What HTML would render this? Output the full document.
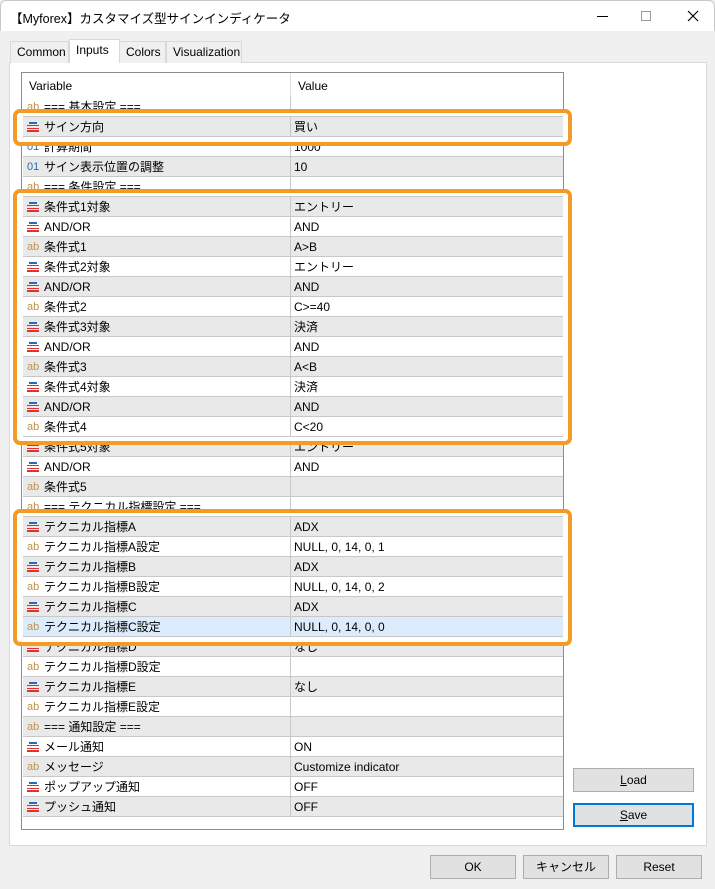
<!DOCTYPE html>
<html><head><meta charset="utf-8"><style>
*{margin:0;padding:0;box-sizing:border-box}
body{width:715px;height:889px;background:#f0f0f0;font-family:"Liberation Sans","Noto Sans CJK JP",sans-serif;font-size:12px;color:#000;position:relative;overflow:hidden}
.abs{position:absolute}
.title{left:0;top:0;width:715px;height:31px;background:#fff;border:1px solid #c8c8c8;border-bottom:none;border-radius:6px 6px 0 0}
.title span{position:absolute;left:9px;top:7px;font-size:12.5px}
.tab{position:absolute;top:41px;height:22px;border:1px solid #d9d9d9;border-bottom:none;background:#f0f0f0;padding:0 6px;line-height:20px;font-size:12px}
.page{left:9px;top:62px;width:698px;height:784px;background:#fff;border:1px solid #d9d9d9}
.tbl{left:21px;top:72px;width:543px;height:758px;border:1px solid #8c8c8c;background:#fff;overflow:hidden}
.hdr{position:absolute;left:0;top:0;width:541px;height:24px}
.hdr span{position:absolute;top:6px}
.row{position:absolute;left:1px;width:540px;height:20px;border-bottom:1px solid #c8c8c8;line-height:19px}
.g{background:#e9e9e9}.w{background:#fff}.s{background:#dcecfc}
.row .l{position:absolute;left:21px;top:1px;white-space:nowrap}
.row .v{position:absolute;left:271px;top:1px;white-space:nowrap}
.row .d{position:absolute;left:267px;top:0;width:1px;height:20px;background:#c8c8c8}
.ic{position:absolute;left:4px;top:5px;width:12px;height:10px}
.ic i{position:absolute;left:0;width:12px;height:1.5px}
.ab{position:absolute;left:4px;top:1px;color:#c0944a;font-size:11px}
.o1{position:absolute;left:4px;top:1px;color:#2a6ab8;font-size:11px}
.box{position:absolute;border:4px solid #f29b26;border-radius:7px;background:#fff;overflow:hidden}
.box .row{left:6px;border-top:1px solid #c8c8c8;height:21px}
.btn{position:absolute;height:24px;background:#e1e1e1;border:1px solid #adadad;text-align:center;line-height:22px;font-size:12px}
</style></head><body>
<div class="abs title"><span>【Myforex】カスタマイズ型サインインディケータ</span>
<div class="abs" style="left:596px;top:15px;width:11px;height:1px;background:#000"></div>
<div class="abs" style="left:640px;top:10px;width:10px;height:10px;border:1px solid #999"></div>
<svg class="abs" style="left:686px;top:9px" width="12" height="12"><path d="M1 1L11 11M11 1L1 11" stroke="#000" stroke-width="1.2"/></svg>
</div>
<div class="abs page"></div>
<div class="tab" style="left:10px;width:59px">Common</div>
<div class="tab" style="left:69px;top:39px;height:24px;width:51px;background:#fff;z-index:2">Inputs</div>
<div class="tab" style="left:119px;width:47px">Colors</div>
<div class="tab" style="left:166px;width:76px">Visualization</div>

<div class="abs tbl" id="t">
<div class="hdr"><span style="left:7px">Variable</span><span style="left:276px">Value</span><div class="abs" style="left:268px;top:0;width:1px;height:24px;background:#ddd"></div></div>
</div>

<div class="box" id="b0" style="left:13px;top:109px;width:559px;height:37px"></div>
<div class="box" id="b1" style="left:13px;top:189px;width:559px;height:256px"></div>
<div class="box" id="b2" style="left:13px;top:509px;width:559px;height:137px"></div>

<div class="btn" style="left:573px;top:768px;width:121px"><u>L</u>oad</div>
<div class="btn" style="left:573px;top:803px;width:121px;border:2px solid #0078d7;line-height:20px"><u>S</u>ave</div>
<div class="btn" style="left:430px;top:855px;width:86px">OK</div>
<div class="btn" style="left:523px;top:855px;width:86px">キャンセル</div>
<div class="btn" style="left:616px;top:855px;width:86px">Reset</div>

<script>
var L='<div class="ic"><i style="top:0;left:2px;width:8px;background:#2a6ab8"></i><i style="top:2.5px;background:#2a6ab8"></i><i style="top:5.5px;background:#e03030"></i><i style="top:8px;background:#e03030"></i></div>';
var rows=[
['a','=== 基本設定 ===',''],['l','サイン方向','買い'],['o','計算期間','1000'],['o','サイン表示位置の調整','10'],['a','=== 条件設定 ===',''],
['l','条件式1対象','エントリー'],['l','AND/OR','AND'],['a','条件式1','A&gt;B'],
['l','条件式2対象','エントリー'],['l','AND/OR','AND'],['a','条件式2','C&gt;=40'],
['l','条件式3対象','決済'],['l','AND/OR','AND'],['a','条件式3','A&lt;B'],
['l','条件式4対象','決済'],['l','AND/OR','AND'],['a','条件式4','C&lt;20'],
['l','条件式5対象','エントリー'],['l','AND/OR','AND'],['a','条件式5',''],['a','=== テクニカル指標設定 ===',''],
['l','テクニカル指標A','ADX'],['a','テクニカル指標A設定','NULL, 0, 14, 0, 1'],
['l','テクニカル指標B','ADX'],['a','テクニカル指標B設定','NULL, 0, 14, 0, 2'],
['l','テクニカル指標C','ADX'],['a','テクニカル指標C設定','NULL, 0, 14, 0, 0'],
['l','テクニカル指標D','なし'],['a','テクニカル指標D設定',''],
['l','テクニカル指標E','なし'],['a','テクニカル指標E設定',''],['a','=== 通知設定 ===',''],
['l','メール通知','ON'],['a','メッセージ','Customize indicator'],['l','ポップアップ通知','OFF'],['l','プッシュ通知','OFF']];
function mk(i,top){var r=rows[i];var c=(i==26)?'s':(i%2?'g':'w');
var ic=r[0]=='l'?L:(r[0]=='a'?'<span class="ab">ab</span>':'<span class="o1">01</span>');
return '<div class="row '+c+'" style="top:'+top+'px">'+ic+'<span class="l">'+r[1]+'</span><div class="d"></div><span class="v">'+r[2]+'</span></div>';}
var h='';for(var i=0;i<rows.length;i++){h+=mk(i,24+i*20);}
document.getElementById('t').insertAdjacentHTML('beforeend',h);
var ranges=[[1,1],[5,16],[21,26]];
for(var b=0;b<3;b++){var bh='';for(var i=ranges[b][0];i<=ranges[b][1];i++){bh+=mk(i,3+(i-ranges[b][0])*20);}
document.getElementById('b'+b).innerHTML=bh;}
</script>
</body></html>
